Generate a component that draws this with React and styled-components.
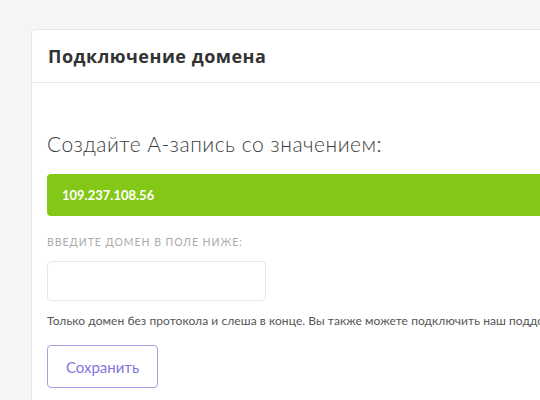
import React from "react";
import styled, { createGlobalStyle } from "styled-components";

const Global = createGlobalStyle`
  html, body { margin: 0; padding: 0; background: #f5f5f5; overflow: hidden; }
  body { font-family: "Lato", "Liberation Sans", sans-serif; }
  * { box-sizing: border-box; }
`;

const Page = styled.div`
  width: 540px;
  height: 400px;
  padding: 29px 0 0 31px;
  overflow: hidden;
`;

const Card = styled.section`
  width: 640px;
  height: 420px;
  background: #fff;
  border: 1px solid #e8e8e8;
  border-radius: 4px 0 0 0;
`;

const Header = styled.header`
  height: 53px;
  display: flex;
  align-items: center;
  padding-left: 16px;
  border-bottom: 1px solid #e8e8e8;
`;

const Title = styled.h1`
  margin: 0;
  font-family: "Open Sans", sans-serif;
  font-weight: 700;
  font-size: 18px;
  color: #333;
  letter-spacing: 0.5px;
`;

const Body = styled.div`
  padding: 48px 16px 0 15px;
  display: flex;
  flex-direction: column;
  align-items: flex-start;
`;

const Heading = styled.h2`
  margin: 0;
  font-family: "Lato", sans-serif;
  font-weight: 300;
  font-size: 21px;
  line-height: 26px;
  color: #3d3d3d;
  letter-spacing: 0.5px;
`;

const ValueBar = styled.div`
  margin-top: 17px;
  align-self: stretch;
  height: 42px;
  background: #84c817;
  border-radius: 4px;
  display: flex;
  align-items: center;
  padding-left: 15px;
  color: #fff;
  font-family: "Lato", sans-serif;
  font-weight: 700;
  font-size: 13px;
`;

const Label = styled.div`
  margin-top: 19px;
  font-family: "Lato", sans-serif;
  font-size: 10.5px;
  line-height: 14px;
  color: #aaa;
  text-transform: uppercase;
  letter-spacing: 0.95px;
`;

const Input = styled.input`
  margin-top: 12px;
  width: 219px;
  height: 40px;
  border: 1px solid #e6e6e6;
  border-radius: 4px;
  outline: none;
  background: #fff;
`;

const Help = styled.p`
  margin: 13px 0 0;
  font-family: "Lato", sans-serif;
  font-size: 12px;
  line-height: 14px;
  color: #555;
  white-space: nowrap;
  letter-spacing: 0.06px;
`;

const Button = styled.button`
  margin-top: 17px;
  width: 111px;
  height: 43px;
  background: #fff;
  border: 1px solid #a99ce8;
  border-radius: 4px;
  color: #8576dd;
  font-family: "Lato", sans-serif;
  font-size: 15px;
  cursor: pointer;
`;

export default function App() {
  return (
    <>
      <Global />
      <Page>
        <Card>
          <Header>
            <Title>Подключение домена</Title>
          </Header>
          <Body>
            <Heading>Создайте А-запись со значением:</Heading>
            <ValueBar>109.237.108.56</ValueBar>
            <Label>Введите домен в поле ниже:</Label>
            <Input type="text" />
            <Help>
              Только домен без протокола и слеша в конце. Вы также можете подключить наш поддомен
            </Help>
            <Button>Сохранить</Button>
          </Body>
        </Card>
      </Page>
    </>
  );
}
